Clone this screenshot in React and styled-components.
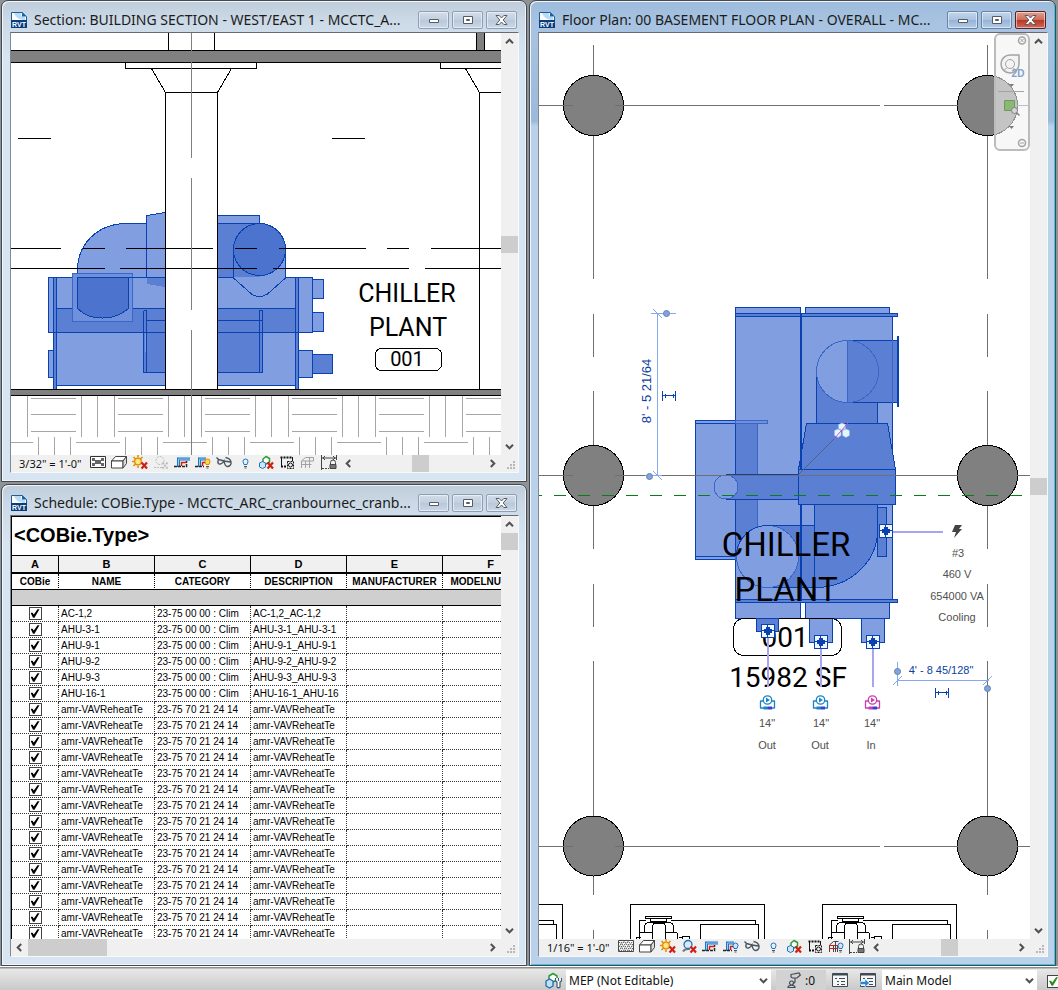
import React, { useState } from 'react';
import styled, { createGlobalStyle, css } from 'styled-components';

const uiFont = '"Noto Sans", "Open Sans", sans-serif';
const noteFont = 'Roboto, "Liberation Sans", sans-serif';
const plainFont = '"Liberation Sans", Arial, sans-serif';

const light = '#819ee0';
const mid = '#6f90da';
const dark = '#5b7fd3';
const deep = '#4c74cf';
const edge = '#0a41b0';
const grid = '#707070';

const GlobalStyle = createGlobalStyle`
    * {
        box-sizing: border-box;
    }

    body {
        margin: 0;
        background-color: #8f9396;
        font-family: ${uiFont};
    }
`
const Page = styled.div`
    height: 100vh;
    display: flex;
    flex-direction: column;
    overflow: hidden;
`
const Desktop = styled.main`
    flex: 1;
    min-height: 0;
    display: grid;
    grid-template-columns: 526fr 527fr;
    gap: 2px;
    padding: 0 2px 0 1px;
`
const Stack = styled.div`
    min-width: 0;
    min-height: 0;
    display: grid;
    grid-template-rows: 1fr 1fr;
    gap: 2px;
`
const WindowBox = styled.section`
    min-width: 0;
    min-height: 0;
    display: flex;
    flex-direction: column;
    padding: 0 7px 8px 8px;
    border: 1px solid #43494f;
    border-radius: 7px 7px 0 0;
    background: ${({ $active }) => $active
        ? 'linear-gradient(#9dbbdc, #a9c4e2 24px, #9bb9da 120px, #b9d1ea 125px)'
        : 'linear-gradient(#bfcddb, #ccd9e6 20px, #d7e4f2 60px)'};
    box-shadow: inset 1px 1px 0 #f0f6fb, inset -1px -1px 0 ${({ $active }) => $active ? '#35c6e4' : '#eef4fa'};
`
const TitleBar = styled.header`
    flex: none;
    height: ${({ $compact }) => $compact ? '30px' : '31px'};
    display: flex;
    align-items: center;
    gap: 3px;
    padding: 6px 2px 0 1px;
`
const Title = styled.h1`
    flex: 1;
    min-width: 0;
    margin: 0 0 0 4px;
    overflow: hidden;
    white-space: nowrap;
    font-size: 14px;
    font-weight: 400;
    line-height: 18px;
    color: #1c1c1c;
`
const CaptionButton = styled.button`
    flex: none;
    width: 31px;
    height: 18px;
    display: flex;
    align-items: center;
    justify-content: center;
    padding: 0;
    border: 1px solid #8e9fb5;
    border-radius: 2px;
    background: linear-gradient(#d3dde9, #c0cede 50%, #b8c8da 50%, #cad7e5);
    box-shadow: inset 0 0 0 1px rgba(255, 255, 255, 0.5);

    ${({ $active }) => $active && css`
        border-color: #6783a8;
        background: linear-gradient(#c3d5ea, #a9c2df 50%, #94b2d6 50%, #b5cce6);
    `}

    ${({ $danger }) => $danger && css`
        border-color: #5e1f1f;
        background: linear-gradient(#e0a08f, #cf6a56 50%, #b93524 50%, #d0685a);
    `}
`
const Frame = styled.div`
    flex: 1;
    min-height: 0;
    display: grid;
    grid-template-columns: minmax(0, 1fr) 17px;
    grid-template-rows: minmax(0, 1fr) 17px;
    border: 1px solid #f7fafd;
    border-top-color: #646b72;
    border-left-color: #82888e;
    background-color: #f0f0f0;
`
const View = styled.div`
    overflow: hidden;
    background-color: #ffffff;
`
const Drawing = styled.svg`
    display: block;
    width: 100%;
    height: 100%;
    shape-rendering: crispEdges;
    stroke-linejoin: round;
`
const Track = styled.div`
    display: flex;
    flex: 1;
    min-width: 0;
    flex-direction: ${({ $vertical }) => $vertical ? 'column' : 'row'};
    background-color: #f0f0f0;
`
const ArrowButton = styled.button`
    flex: none;
    width: 17px;
    height: 17px;
    display: flex;
    align-items: center;
    justify-content: center;
    padding: 0;
    border: 0;
    background-color: transparent;
`
const Gap = styled.div`
    flex: 1;
`
const Thumb = styled.div`
    flex: none;
    width: ${({ $length, $vertical }) => $vertical ? 'auto' : `${$length}px`};
    height: ${({ $length, $vertical }) => $vertical ? `${$length}px` : 'auto'};
    background-color: #cdcdcd;
`
const ControlRow = styled.div`
    min-width: 0;
    display: flex;
    align-items: center;
    overflow: hidden;
`
const ScaleButton = styled.button`
    flex: none;
    width: 77px;
    padding: 0 0 0 8px;
    border: 0;
    background-color: transparent;
    font-family: ${uiFont};
    font-size: 11px;
    line-height: 17px;
    text-align: left;
    white-space: nowrap;
    color: #111111;
`
const ToolButton = styled.button`
    flex: none;
    width: 21px;
    height: 17px;
    display: flex;
    align-items: center;
    justify-content: center;
    padding: 0 0 2px;
    border: 0;
    background-color: transparent;
    opacity: ${({ disabled }) => disabled ? 0.5 : 1};
`
const Grip = styled.div`
    display: flex;
    align-items: flex-end;
    justify-content: flex-end;
    padding: 2px;
`
const Sheet = styled.table`
    width: 527px;
    table-layout: fixed;
    border-collapse: separate;
    border-spacing: 0;
    border-left: 1px solid #000000;
    font-family: ${plainFont};
    color: #000000;
`
const SheetTitle = styled.caption`
    height: 40px;
    padding: 0 2px;
    border: 1px solid #000000;
    background-color: #ffffff;
    font-family: ${plainFont};
    font-size: 20px;
    font-weight: 700;
    line-height: 37px;
    text-align: left;
`
const LetterCell = styled.th`
    height: 18px;
    padding: 0;
    border-right: 1px solid #000000;
    border-bottom: 2px solid #000000;
    background-color: #f0f0f0;
    font-size: 11px;
    line-height: 15px;
`
const NameCell = styled.th`
    height: 16px;
    padding: 0;
    border-right: 1px dotted #000000;
    border-bottom: 1px solid #000000;
    font-size: 10px;
    line-height: 15px;
    white-space: nowrap;
`
const BandCell = styled.td`
    height: 16px;
    padding: 0;
    border-bottom: 1px solid #000000;
    background-color: #d0cfcf;
`
const Cell = styled.td`
    height: 16px;
    padding: ${({ $center }) => $center ? '0' : '0 0 0 2px'};
    border-right: 1px dotted #333333;
    border-bottom: 1px dotted #333333;
    overflow: hidden;
    font-size: 10px;
    line-height: 15px;
    white-space: nowrap;
    text-align: ${({ $center }) => $center ? 'center' : 'left'};
`
const Tick = styled.input`
    appearance: none;
    display: inline-block;
    width: 13px;
    height: 13px;
    margin: 1px 0 0;
    border: 1px solid #444444;
    background-color: #ffffff;
    vertical-align: top;

    &:checked::before {
        content: '';
        display: block;
        width: 9px;
        height: 9px;
        margin: 1px;
        background-color: ${({ $green }) => $green ? '#2d8a1e' : '#000000'};
        clip-path: polygon(0 42%, 24% 42%, 36% 62%, 78% 4%, 100% 4%, 44% 96%, 28% 96%);
    }
`
const StatusTick = styled(Tick)`
    flex: none;
    margin: 3px -2px 0 10px;
`
const StatusBar = styled.footer`
    flex: none;
    height: 24px;
    display: flex;
    align-items: center;
    padding-top: 3px;
    border-top: 1px solid #ffffff;
    background: linear-gradient(#8d8d8d 1px, #e8e8e8 2px, #c9c9c9);
`
const StatusIcon = styled.button`
    flex: none;
    width: ${({ $width }) => $width}px;
    height: 20px;
    display: flex;
    align-items: center;
    justify-content: center;
    gap: 4px;
    padding: 0;
    border: 0;
    background-color: ${({ $filled }) => $filled ? '#d2d2d2' : 'transparent'};
    font-family: ${uiFont};
    font-size: 12px;
    color: #111111;
`
const Picker = styled.div`
    flex: none;
    width: ${({ $width }) => $width}px;
    height: 20px;
    display: grid;
    align-items: center;
    margin-right: ${({ $after }) => $after}px;
    background-color: #ffffff;

    > * {
        grid-area: 1 / 1;
    }

    > svg {
        justify-self: end;
        margin-right: 3px;
        pointer-events: none;
    }
`
const Select = styled.select`
    appearance: none;
    width: 100%;
    height: 20px;
    padding: 0 20px 0 3px;
    border: 0;
    background-color: transparent;
    font-family: ${uiFont};
    font-size: 12px;
    color: #111111;
`

const directions = { up: 0, right: 90, down: 180, left: 270 };

function Chevron({ to }) {
    return (
        <svg width='9' height='9' viewBox='0 0 9 9'>
            <path d='M1 6.2 4.5 2.7 8 6.2' fill='none' stroke='#505050' strokeWidth='2' transform={`rotate(${directions[to]} 4.5 4.5)`} />
        </svg>
    )
}

function Scrollbar({ vertical, thumb = 17, atStart }) {
    return (
        <Track $vertical={vertical}>
            <ArrowButton aria-label={vertical ? 'Scroll up' : 'Scroll left'}>
                <Chevron to={vertical ? 'up' : 'left'} />
            </ArrowButton>
            {!atStart && <Gap />}
            <Thumb $length={thumb} $vertical={vertical} />
            <Gap />
            <ArrowButton aria-label={vertical ? 'Scroll down' : 'Scroll right'}>
                <Chevron to={vertical ? 'down' : 'right'} />
            </ArrowButton>
        </Track>
    )
}

function SizeGrip() {
    return (
        <Grip>
            <svg width='9' height='9' viewBox='0 0 9 9' fill='#b8b8b8'>
                <path d='M6 0h2v2H6zM6 3h2v2H6zM6 6h2v2H6zM3 3h2v2H3zM3 6h2v2H3zM0 6h2v2H0z' />
            </svg>
        </Grip>
    )
}

function FileIcon() {
    return (
        <svg width='16' height='16' viewBox='0 0 16 16'>
            <path d='M.5.500H11l4.500 4V9H.5z' fill='#ffffff' stroke='#1a5fa0' />
            <path d='M3 1h7v3l4 1v3C9 8 5 6 3 1z' fill='#b9dcf4' />
            <path d='M11 0v4.500h4.500z' fill='#1565ad' />
            <path d='M0 8h16v8H0z' fill='#0a3d7c' />
            <text x='8' y='15' textAnchor='middle' fontFamily={plainFont} fontSize='7' fontWeight='700' fill='#ffffff'>RVT</text>
        </svg>
    )
}

function RedCross() {
    return <path d='M9.5 7.5l5.500 6M15 7.500l-5.500 6' stroke='#cf1f14' strokeWidth='2.200' fill='none' />
}

function Bulb({ x, fill, stroke }) {
    return (
        <g transform={`translate(${x} 0)`} stroke={stroke} fill={fill}>
            <path d='M0 6.500a2.500 2.500 0 1 1 5 0c0 1.300-1 1.800-1 3H1c0-1.200-1-1.700-1-3z' />
            <path d='M1 11.500h3M1.500 13h2' stroke='#555555' fill='none' />
        </g>
    )
}

const toolIcons = {
    coarse: (
        <g>
            <path d='M.5 1.500h15v11H.5z' fill='#ffffff' stroke='#333333' />
            <path d='M2 3h3v3H2zM11 3h3v3h-3zM5 5h6v4H5zM2 8h3v3H2zM11 8h3v3h-3z' fill='#666666' />
        </g>
    ),
    fine: (
        <g>
            <path d='M.5 1.500h15v11H.5z' fill='#ffffff' stroke='#444444' />
            <path d='M1 3.500h14M1 7.500h14M1 11.500h14' stroke='#666666' strokeDasharray='1 1' />
            <path d='M2 5.500h13M2 9.500h13' stroke='#666666' strokeDasharray='1 1' />
            <path d='M1 2.500l10 10M5 1.500l10 10M9 1.500l6 6M1 6.500l6 6M15 2.500l-10 10M11 1.500l-10 10M7 1.500l-6 6M15 6.500l-6 6' stroke='#8a8a8a' strokeWidth='0.700' />
        </g>
    ),
    style: (
        <g fill='#ffffff' stroke='#444444'>
            <path d='M.5 6l4-4.500h11L12 6z' />
            <path d='M.5 6H12v7H.5z' />
            <path d='M12 6l3.500-4.500v7L12 13z' fill='#dddddd' />
        </g>
    ),
    sun: (
        <g>
            <path d='M6 0v2.500M1.500 2l2 2M10.500 2l-2 2M0 6.500h2.500M1.500 11l2-2M6 10.500V13' stroke='#e08a00' strokeWidth='1.500' />
            <circle cx='6' cy='6.500' r='3.300' fill='#ffe680' stroke='#e08a00' strokeWidth='1.300' />
            <RedCross />
        </g>
    ),
    shadow: (
        <g>
            <path d='M2 12.500c1-2 3-3 7-2.500' stroke='#777777' strokeWidth='2' fill='none' />
            <circle cx='7' cy='5.500' r='4' fill='#d6eafa' stroke='#2370b8' strokeWidth='1.300' />
            <RedCross />
        </g>
    ),
    shadowOff: (
        <g fill='none' stroke='#8a8a8a' strokeDasharray='2 1'>
            <circle cx='7' cy='5.500' r='4' />
            <path d='M1 12.500h8' />
            <path d='M9.500 7.500l5 6M14.500 7.500l-5 6' strokeWidth='2' />
        </g>
    ),
    crop: (
        <g fill='none'>
            <path d='M4.500 12V4H16' stroke='#1d72c4' strokeWidth='3' />
            <path d='M4.500 12V4H16' stroke='#9bd0f5' />
            <path d='M0 11.500h12.500V6' stroke='#222222' strokeWidth='1.500' strokeDasharray='3 1' />
            <path d='M7.500 11V7.500h5' stroke='#cf1f14' strokeWidth='1.500' />
        </g>
    ),
    cropBulb: (
        <g fill='none'>
            <path d='M4.500 12V4H11' stroke='#1d72c4' strokeWidth='3' />
            <path d='M4.500 12V4H11' stroke='#9bd0f5' />
            <path d='M0 11.500h9' stroke='#222222' strokeWidth='1.500' strokeDasharray='3 1' />
            <path d='M7.500 11V7.500H10' stroke='#cf1f14' strokeWidth='1.500' />
        </g>
    ),
    glasses: (
        <path d='M.5 2.500l2 2c-1.500 3 0 5 2 4.500s3-2 3.500-3c.5 3 1.500 5.500 3.500 5.500s4-2 3.500-4.500-2.500-4-5.500-4.500M2.500 4.500l5.500 1.500 6.500 1' fill='none' stroke='#4b5560' strokeWidth='1.400' />
    ),
    reveal: (
        <g strokeLinejoin='round'>
            <path d='M5 4l3-2.500 3.500 2v3.500L8 9 5 7z' fill='#ffffff' stroke='#2f9a35' strokeWidth='1.500' />
            <path d='M1.500 8l3-1.500 3 1.500v4l-3 1.500-3-1.500z' fill='#cfe6f8' stroke='#1d72c4' />
            <RedCross />
        </g>
    ),
    template: (
        <g fill='none' stroke='#111111'>
            <path d='M1.500 2.500h12' strokeWidth='2' strokeDasharray='2 1' />
            <path d='M2.500 3v8.500M13.500 2v4' />
            <path d='M2 11.500h5.500' strokeWidth='2' strokeDasharray='2 1' />
            <circle cx='11.500' cy='10' r='2' />
            <path d='M8.500 6.500h6v7h-6z' strokeDasharray='2 1' />
        </g>
    ),
    analytic: (
        <g fill='none' stroke='#555555'>
            <path d='M1.500 13V6l4-3.500h8V6h-12M5.500 13V6M9.500 13V3M1.500 9.500h10' />
        </g>
    ),
    analyticOn: (
        <g fill='none' stroke='#444444'>
            <path d='M1.500 13V6l4-3.500h5M5.500 13V6M9.500 13V6' />
            <path d='M1 6.500h9M1 9.500h9' stroke='#cf1f14' />
            <path d='M7.500 13V3' />
        </g>
    ),
    constraint: (
        <g fill='none' stroke='#444444'>
            <path d='M.5 0v15M15.500 0v5M1 3h14M4 1L2 3l2 2M12 1l2 2-2 2' />
            <path d='M1 13.500h7' strokeDasharray='2 1' />
            <path d='M9.500 9V7.500a2.500 2.500 0 0 1 5 0V9' />
            <path d='M9 9.500h6v4H9z' fill='#777777' />
        </g>
    ),
}

function ViewTool({ name, label, bulb, disabled }) {
    return (
        <ToolButton aria-label={label} disabled={disabled}>
            <svg width='17' height='15' viewBox='0 0 17 15'>
                {toolIcons[name]}
                {bulb === 'yellow' && <Bulb x={10} fill='#ffd84a' stroke='#d98c00' />}
                {bulb === 'blue' && <Bulb x={10} fill='#cfe6fa' stroke='#1d72c4' />}
                {bulb === 'single' && <Bulb x={6} fill='#e4f2fd' stroke='#1d72c4' />}
            </svg>
        </ToolButton>
    )
}

function ViewControls({ scale, plan }) {
    return (
        <ControlRow>
            <ScaleButton>{scale}</ScaleButton>
            <ViewTool name={plan ? 'fine' : 'coarse'} label='Detail level' />
            <ViewTool name='style' label='Visual style' />
            <ViewTool name='sun' label='Sun path' />
            <ViewTool name={plan ? 'shadow' : 'shadowOff'} label='Shadows' disabled={!plan} />
            <ViewTool name='crop' label='Crop view' />
            <ViewTool name='cropBulb' label='Crop region' bulb={plan ? 'blue' : 'yellow'} />
            <ViewTool name='glasses' label='Temporary hide' />
            <ViewTool label='Reveal hidden' bulb='single' />
            <ViewTool name='reveal' label='Worksharing display' />
            <ViewTool name='template' label='Temporary view properties' />
            <ViewTool name={plan ? 'analyticOn' : 'analytic'} label='Analytical model' bulb={plan && 'blue'} disabled={!plan} />
            <ViewTool name='constraint' label='Reveal constraints' />
            <Scrollbar />
        </ControlRow>
    )
}

function Window({ title, active, compact, children }) {
    return (
        <WindowBox $active={active}>
            <TitleBar $compact={compact}>
                <FileIcon />
                <Title>{title}</Title>
                <CaptionButton $active={active} aria-label='Minimize'>
                    <svg width='12' height='12' viewBox='0 0 12 12'>
                        <path d='M1.500 5.500h9v3h-9z' fill='#ffffff' stroke='#555c66' />
                    </svg>
                </CaptionButton>
                <CaptionButton $active={active} aria-label='Restore'>
                    <svg width='12' height='12' viewBox='0 0 12 12'>
                        <path d='M1.500 2.500h9v7h-9zM4.500 5.500v1h3v-1z' fill='#ffffff' fillRule='evenodd' stroke='#555c66' />
                    </svg>
                </CaptionButton>
                <CaptionButton $active={active} $danger={active} aria-label='Close'>
                    <svg width='13' height='12' viewBox='0 0 13 12'>
                        <path d='M1 1.500h3.200l2.300 2.500 2.300-2.500H12L8.200 6l3.800 4.500H8.800L6.500 8l-2.300 2.500H1L4.800 6z' fill='#ffffff' stroke='#555c66' />
                    </svg>
                </CaptionButton>
            </TitleBar>
            <Frame>{children}</Frame>
        </WindowBox>
    )
}

const hatchColumns = [-1, 0, 1, 2, 3, 4, 5];

function SectionDrawing() {
    return (
        <Drawing viewBox='11 33 490 422' preserveAspectRatio='xMinYMin slice'>
            <g stroke='#a6a6a6' fill='none'>
                {hatchColumns.map((n) => (
                    <path
                        key={n}
                        transform={`translate(${n * 87} 0)`}
                        d='M81.500 396v41M97.500 396v41M114.500 396v41M31 398.500h45M31 414.500h45M31 431.500h45M-11 442.500h44M38.500 437v18M54.500 437v18M70.500 437v18'
                    />
                ))}
            </g>

            <g stroke='#000000' fill='none'>
                <path d='M168.500 33v18M214.500 33v18' />
                <path d='M476.500 33v18h8V33' fill='#808080' />
                <path d='M125.500 63v5.500h131V63M151.500 68.500l14 24h52l14-24M440.500 63v5.500H501M465.500 68.500l14 24H501M479.500 92v298' />
                <path d='M18 138.500h33M332 138.500h33' />
            </g>

            <g stroke={edge}>
                <path d='M127 223.500h19.500V278h-69v-8c0-26 20-46.500 49.500-46.500z' fill={light} />
                <path d='M146.500 215.500l19-3v75l-19-3.500z' fill={light} />
                <path d='M217.500 215.500h42V278h-42z' fill={light} />
                <path d='M217.500 223.500h42V277h-42z' fill={dark} />
                <path d='M48.500 277.500h264v55h-264z' fill={light} />
                <path d='M147 278h18v9l-18-3z' fill={dark} stroke='none' />
                <path d='M53.500 277.500h245V389h-245z' fill='none' />
                <path d='M53.500 332.500h245V389h-245z' fill={light} />
                <path d='M56.500 308.500h239v24h-239z' fill={dark} />
                <path d='M48.500 350.500h5v27h-5zM298.500 350.500h14v27h-14zM312.500 279.500h11v19h-11zM312.500 312.500h11v19h-11z' fill={light} />
                <path d='M312.500 354.500h20v19h-20z' fill={dark} />
                <path d='M143.500 310.500h3v10h116v-10h-3v10M143.500 310.500v62h119v-52h-116v52' fill={dark} />
                <path d='M262.500 310.500v62M259.500 310.500v62M146.500 372.500v-62' fill='none' />
                <path d='M72.500 273.500h60v48h-60z' fill={mid} stroke='#3c66c6' />
                <path d='M77.500 277.500h51v31c-8 6-14 9.500-26 9.500s-18-3-25-9.500z' fill={deep} />
                <path d='M53.500 277.500h3V389h-3zM295.500 277.500h3V389h-3z' fill={dark} />
                <path d='M233.500 250v28l18 16q8 5 16 0l18-16v-28z' fill={light} />
                <path d='M218 232.500h15.500V277H218z' fill={dark} stroke='none' />
                <path d='M233.500 250h26v27h-26z' fill={dark} stroke='none' />
                <circle cx='259.500' cy='249.500' r='26' fill={deep} />
                <path d='M56.500 385.500h239M48.500 332.500h264M128 277.500h38M217 277.500h16M233.500 250v28' fill='none' />
            </g>
            <path d='M57 386h238v3.500H57z' fill='#ffffff' />

            <path d='M165.500 93v297M217.500 93v297' stroke='#000000' />
            <path d='M166 93h51v297h-51z' fill='#ffffff' />
            <g stroke='#000000'>
                <path d='M11 248.500h50M83 248.500h22M126 248.500h87M235 248.500h22M279 248.500h87M387 248.500h22M431 248.500h70' />
                <path d='M11 268.500h94M120 268.500h137M273 268.500h136M425 268.500h76' />
                <path d='M10 50.500h492v12H10zM10 389.500h492v6H10z' fill='#808080' />
            </g>
            <path d='M191.500 33v125M191.500 178v132M191.500 330v125' stroke='#808080' />

            <g fontFamily={noteFont} fontSize='25' textAnchor='middle'>
                <text x='407' y='302'>CHILLER</text>
                <text x='408' y='336'>PLANT</text>
                <text x='407' y='366' fontSize='20'>001</text>
            </g>
            <rect x='375.500' y='348.500' width='66' height='22' rx='6' fill='none' stroke='#000000' />
        </Drawing>
    )
}

const columnRows = [105.5, 475.5, 846];
const gridLines = [593.5, 987.5];

function Furniture({ x }) {
    return (
        <g transform={`translate(${x} 0)`} stroke='#000000' fill='none'>
            <path d='M.5 940V904.500h134V940M9.500 940V920.500h6M41 920.500h84.500v4M70.500 940V924.500h58V940M125 920.500' />
            <path d='M15.500 916.500h26v2h-26zM20.500 918.500v3h16v-3' />
            <path d='M14.500 932v-5q0-4.500 5-4.500h19q5 0 5 4.500v5M22.500 940v-13q0-4 4-4h5q4 0 4 4v13M9 932.500h13M6.500 940v-3h4M35 932.500h12V940M52.500 940v-4h7v4M49 937.500h4' />
        </g>
    )
}

function Connector({ x, y }) {
    return (
        <g transform={`translate(${x} ${y})`}>
            <path d='M-6.500-6.500h13v13h-13z' fill='#eef5ff' stroke={edge} />
            <path d='M-.5-6v12M-6-.5H6' stroke={edge} />
            <path d='M-2-4h4v2h2v4H2v2h-4V2h-2v-4h2z' fill={edge} />
        </g>
    )
}

function Pump({ x, color }) {
    return (
        <g transform={`translate(${x} 703)`} shapeRendering='auto' fill='none' stroke={color}>
            <path d='M-4-2h-3v7H7v-7H4' strokeWidth='1.300' />
            <circle cx='0' cy='-3' r='4.200' strokeWidth='1.300' fill='#ffffff' />
            <path d='M-1.500-5.500L2.500-3l-4 2.500z' fill={color} stroke='none' />
            <path d='M-4 5h4' strokeWidth='3' />
            <path d='M0 5h4.500' strokeWidth='3' stroke='#3a3fd0' />
        </g>
    )
}

function DimensionToggle({ x, y }) {
    return <path transform={`translate(${x} ${y})`} d='M-6.500-5V5M6.500-5V5M-6-.5H6M-4-2.500v4M4-2.500v4' stroke={edge} fill='none' />
}

function PlanDrawing() {
    return (
        <Drawing viewBox='539 33 491 906' preserveAspectRatio='xMinYMin slice'>
            <g stroke={grid} fill='none'>
                {gridLines.map((x) => (
                    <path key={x} d={`M${x} 45V279M${x} 314v43M${x} 391v158M${x} 584v43M${x} 661v234M${x} 930v9`} />
                ))}
            </g>

            <g fill='#808080' stroke='#000000'>
                {columnRows.map((y) => gridLines.map((x) => (
                    <circle key={`${x}-${y}`} cx={x} cy={y} r='30' />
                )))}
            </g>
            <g stroke={grid}>
                {columnRows.map((y) => (
                    <path key={y} d={`M539 ${Math.floor(y) + 0.5}h34M615 ${Math.floor(y) + 0.5}h265M884 ${Math.floor(y) + 0.5}h74M1017 ${Math.floor(y) + 0.5}h13`} />
                ))}
            </g>

            <g stroke={edge}>
                <path d='M735.500 307.500h65v311h-65zM805.500 307.500h84v311h-84z' fill={light} />
                <path d='M801.500 313.500h91v289h-91z' fill={light} />
                <path d='M695.500 423.500h62v133h-62z' fill={light} />
                <path d='M735.500 423.500h22v133h-22z' fill={dark} stroke='#3c66c6' />
                <path d='M735.500 423v134' />
                <path d='M695.500 420.500h40v3h-40zM695.500 556.500h40v3h-40z' fill={light} />
                <path d='M735.500 420.500h32v3h-32zM735.500 556.500h32v3h-32z' fill={mid} stroke='#3c66c6' />
                <path d='M735.500 313.500h162v3h-162zM735.500 599.500h162v3h-162z' fill={dark} />
                <path d='M816.500 371v53h61v-53z' fill={dark} />
                <path d='M847.500 340.500h50v62h-50z' fill={dark} />
                <path d='M816.500 371.500a31 31 0 0 1 31-31v62a31 31 0 0 1-31-31z' fill={light} stroke='#3c66c6' />
                <path d='M847.500 340.500a31 31 0 0 1 0 62M892.500 340v63' fill='none' stroke='#3c66c6' />
                <path d='M898 336v71' strokeWidth='2' />
                <path d='M806.500 423.500h81l8 46h-97z' fill={dark} />
                <path d='M767.500 525.500h47v-21h63v26c0 30-26 57-62 57h-48z' fill={dark} />
                <circle cx='767.500' cy='556.500' r='31' fill={light} stroke='#3c66c6' />
                <path d='M736.500 552a31 31 0 0 1 31-26.500H798M814.500 525.500v62' fill='none' />
                <path d='M726 474.500h73v25h-73z' fill={dark} />
                <circle cx='726' cy='487' r='12' fill={light} stroke='#3c66c6' />
                <path d='M798.500 469.500h97v35h-97z' fill={dark} />
                <path d='M877.500 507.500h9v49h-9z' fill={dark} />
                <path d='M809.500 618.500h23v24h-23zM861.500 618.500h23v24h-23z' fill={light} />
                <path d='M801 308v162M801 505v96' strokeWidth='2' />
            </g>
            <path d='M801 603h4v16h-4z' fill='#ffffff' />
            <path d='M801 307h4v6h-4z' fill='#ffffff' />

            <path d='M615 475.500h343' stroke={grid} />
            <path d='M554 495.500h476' stroke='#0b7d12' strokeDasharray='12 12' />
            <path d='M539 495.500h3' stroke='#0b7d12' />
            <path d='M799 474l46-46' stroke='#55607a' shapeRendering='auto' />
            <g shapeRendering='auto' fill='#e6f6ff' stroke='#8fb6ea' strokeWidth='0.500'>
                <path d='M838.500 424.500l3.500-1.500 3.500 1.500v4l-3.500 2-3.500-2zM834.500 430.500l3.500-1.500 3 1.500v5l-3 2-3.500-2zM842.500 430.500l3.500-1.500 3.500 1.500v5l-3.500 2-3.500-2z' />
                <path d='M834 439l14-16' stroke='#c64bc0' strokeWidth='1' />
            </g>

            <rect x='733.500' y='618.500' width='108' height='37' rx='10' fill='none' stroke='#000000' />
            <path d='M756.500 618.500h22v13h-22z' fill={dark} stroke={edge} />
            <g fontFamily={noteFont} fontSize='33' textAnchor='middle'>
                <text x='786' y='556'>CHILLER</text>
                <text x='786' y='601'>PLANT</text>
                <text x='785' y='647' fontSize='28'>001</text>
                <text x='788' y='687' fontSize='28'>15982 SF</text>
            </g>

            <path d='M767.500 637v50M821 648v39M872.500 648v39M892 531.500h51' stroke='#a9a4f0' strokeWidth='2' />
            <Connector x={768} y={631} />
            <Connector x={821} y={642} />
            <Connector x={873} y={642} />
            <Connector x={886} y={531} />

            <Pump x={767.5} color='#1c84c6' />
            <Pump x={820.5} color='#1c84c6' />
            <Pump x={872.5} color='#c83fae' />
            <path d='M955 525h7l-3 4h3l-8 9 2-6h-4z' fill='#444444' shapeRendering='auto' />

            <g fontFamily={plainFont} fontSize='11' fill='#505050' textAnchor='middle'>
                <text x='958' y='557'>#3</text>
                <text x='957' y='578'>460 V</text>
                <text x='957' y='600'>654000 VA</text>
                <text x='957' y='621'>Cooling</text>
                <text x='767' y='727'>14"</text>
                <text x='821' y='727'>14"</text>
                <text x='872' y='727'>14"</text>
                <text x='767' y='749'>Out</text>
                <text x='820' y='749'>Out</text>
                <text x='871' y='749'>In</text>
            </g>

            <g stroke='#86a8ee' fill='none'>
                <path d='M657.500 313v163M651 313.500h25M645 475.500h17M897.500 662v24M897 680.500h92' />
                <path d='M653 309l9 9M653 471l9 9M893 685l9-9M983 685l9-9' shapeRendering='auto' />
            </g>
            <g fill='#7fa4e6' stroke='#6a7f9f' shapeRendering='auto'>
                <circle cx='666.500' cy='313.500' r='3' />
                <circle cx='649.500' cy='476.500' r='3' />
                <circle cx='897.500' cy='671.500' r='3' />
                <circle cx='987.500' cy='688.500' r='3' />
            </g>
            <DimensionToggle x={669} y={396} />
            <DimensionToggle x={942} y={693} />
            <g fontFamily={plainFont} fontSize='11' fill='#0b3f9e' textAnchor='middle'>
                <text x='941' y='674'>4' - 8 45/128"</text>
                <text fontSize='13' transform='translate(651 391) rotate(-90)'>8' - 5 21/64</text>
            </g>

            <path d='M539 904.500h23.500V940M539 920.500h14.500v4M539 924.500h17.500V940' fill='none' stroke='#000000' />
            <Furniture x={630} />
            <Furniture x={822} />

            <g shapeRendering='auto'>
                <rect x='995' y='34' width='34' height='116' rx='5' fill='#f2f2f2' fillOpacity='0.600' stroke='#bcbcbc' strokeWidth='2' />
                <g fill='none' stroke='#a3a3a3'>
                    <circle cx='1022' cy='40.500' r='3.500' strokeWidth='1.500' />
                    <path d='M1020.500 39l3 3M1023.500 39l-3 3' />
                    <circle cx='1022' cy='143' r='3.500' strokeWidth='1.500' />
                    <path d='M1020 143h4M998 91.500h26' />
                    <path d='M1010 55h9v9a9 9 0 1 1-9-9z' fill='#f4f4f4' strokeWidth='1.500' />
                    <circle cx='1010' cy='64' r='4.500' />
                    <path d='M1007 67.500l-3 3M1013 67.500l3 3' />
                </g>
                <text x='1018' y='77' fontFamily={plainFont} fontSize='10' fontWeight='700' textAnchor='middle' fill='#7ea3c9'>2D</text>
                <path d='M1004.500 100.500h10v10h-10z' fill='#8cb877' stroke='#6c9a59' />
                <circle cx='1014.500' cy='110.500' r='3' fill='#d5d5d5' stroke='#808080' />
                <path d='M1016.500 112.500l3 3' stroke='#808080' strokeWidth='1.500' />
                <path d='M1009 84h5l-2.500 3zM1009 126h5l-2.500 3z' fill='#7a7a7a' />
            </g>
        </Drawing>
    )
}

const columns = [
    ['A', 'COBie'],
    ['B', 'NAME'],
    ['C', 'CATEGORY'],
    ['D', 'DESCRIPTION'],
    ['E', 'MANUFACTURER'],
    ['F', 'MODELNUMBER'],
];

const airUnits = [
    ['AC-1,2', '23-75 00 00 : Clim', 'AC-1,2_AC-1,2'],
    ['AHU-3-1', '23-75 00 00 : Clim', 'AHU-3-1_AHU-3-1'],
    ['AHU-9-1', '23-75 00 00 : Clim', 'AHU-9-1_AHU-9-1'],
    ['AHU-9-2', '23-75 00 00 : Clim', 'AHU-9-2_AHU-9-2'],
    ['AHU-9-3', '23-75 00 00 : Clim', 'AHU-9-3_AHU-9-3'],
    ['AHU-16-1', '23-75 00 00 : Clim', 'AHU-16-1_AHU-16'],
];
const reheats = Array.from({ length: 15 }, () => ['amr-VAVReheatTe', '23-75 70 21 24 14', 'amr-VAVReheatTe']);
const types = [...airUnits, ...reheats];

function Schedule() {
    const [checked, setChecked] = useState(types.map(() => true));

    const toggle = (index) => {
        setChecked(checked.map((value, i) => i === index ? !value : value));
    }

    return (
        <Sheet>
            <SheetTitle>&lt;COBie.Type&gt;</SheetTitle>
            <colgroup>
                <col width='47' />
                {columns.slice(1).map(([letter]) => <col key={letter} width='96' />)}
            </colgroup>
            <thead>
                <tr>{columns.map(([letter]) => <LetterCell key={letter}>{letter}</LetterCell>)}</tr>
                <tr>{columns.map(([letter, name]) => <NameCell key={letter}>{name}</NameCell>)}</tr>
            </thead>
            <tbody>
                <tr><BandCell colSpan={6} /></tr>
                {types.map(([name, category, description], index) => (
                    <tr key={index}>
                        <Cell $center>
                            <Tick
                                type='checkbox'
                                aria-label={`COBie ${name}`}
                                checked={checked[index]}
                                onChange={() => toggle(index)}
                            />
                        </Cell>
                        <Cell>{name}</Cell>
                        <Cell>{category}</Cell>
                        <Cell>{description}</Cell>
                        <Cell />
                        <Cell />
                    </tr>
                ))}
            </tbody>
        </Sheet>
    )
}

function ListIcon({ arrow }) {
    return (
        <svg width='16' height='16' viewBox='0 0 16 16' fill='none' stroke='#3f4a57'>
            <path d='M.5 1.500h15v13H.5z' fill='#f6f6f6' />
            <path d='M.5 2.500h15' strokeWidth='2' />
            <path d='M3 6.500h2M7 6.500h6M5 9.500h2M9 9.500h4M5 12.500h2M9 12.500h4' />
            {arrow && <path d='M0 9.500h5V7l4.500 4L5 15v-2.500H0z' fill='#2c86d8' stroke='#ffffff' strokeWidth='0.500' />}
        </svg>
    )
}

function Status() {
    return (
        <StatusBar>
            <Gap />
            <StatusIcon $width={26} aria-label='Worksets'>
                <svg width='17' height='17' viewBox='0 0 17 17' strokeLinejoin='round'>
                    <path d='M4 4l4-2.500L12 4v4l-4 2-4-2z' fill='#ffffff' stroke='#2f9a35' strokeWidth='1.500' />
                    <path d='M1 9l3.500-2L8 9v5l-3.500 2L1 14z' fill='#bfe0f5' stroke='#1d6ea8' strokeWidth='1.300' />
                    <path d='M10.500 6v3l1.500 1v5q1.500 1.500 3 0v-5l1.500-1V6M13.500 6v3' fill='#ffffff' stroke='#3d5c78' strokeWidth='1.200' />
                </svg>
            </StatusIcon>
            <Picker $width={205} $after={5}>
                <Select aria-label='Active workset' defaultValue='mep'>
                    <option value='mep'>MEP (Not Editable)</option>
                </Select>
                <Chevron to='down' />
            </Picker>
            <StatusIcon $width={50} $filled>
                <svg width='14' height='17' viewBox='0 0 14 17' fill='none' stroke='#444c55' strokeWidth='1.200'>
                    <path d='M4 2.500L12 1l1.300 2L10 6H5.500L4 5zM8 6v4L5 13M1 15.500c0-3 7-3 7 0zM4.500 9a2 2 0 1 0 .1 0z' />
                </svg>
                :0
            </StatusIcon>
            <StatusIcon $width={28} aria-label='Editing requests'><ListIcon /></StatusIcon>
            <StatusIcon $width={28} aria-label='Design options'><ListIcon arrow /></StatusIcon>
            <Picker $width={155} $after={0}>
                <Select aria-label='Active design option' defaultValue='main'>
                    <option value='main'>Main Model</option>
                </Select>
                <Chevron to='down' />
            </Picker>
            <StatusTick $green type='checkbox' aria-label='Exclude options' defaultChecked />
        </StatusBar>
    )
}

function App() {
    return (
        <>
            <GlobalStyle />
            <Page>
                <Desktop>
                    <Stack>
                        <Window title='Section: BUILDING SECTION - WEST/EAST 1 - MCCTC_A...'>
                            <View><SectionDrawing /></View>
                            <Scrollbar vertical />
                            <ViewControls scale={'3/32" = 1\'-0"'} />
                            <SizeGrip />
                        </Window>
                        <Window compact title='Schedule: COBie.Type - MCCTC_ARC_cranbournec_cranb...'>
                            <View><Schedule /></View>
                            <Scrollbar vertical atStart />
                            <Scrollbar thumb={79} atStart />
                            <SizeGrip />
                        </Window>
                    </Stack>
                    <Window active title='Floor Plan: 00 BASEMENT FLOOR PLAN - OVERALL - MC...'>
                        <View><PlanDrawing /></View>
                        <Scrollbar vertical />
                        <ViewControls plan scale={'1/16" = 1\'-0"'} />
                        <SizeGrip />
                    </Window>
                </Desktop>
                <Status />
            </Page>
        </>
    )
}

export default App
